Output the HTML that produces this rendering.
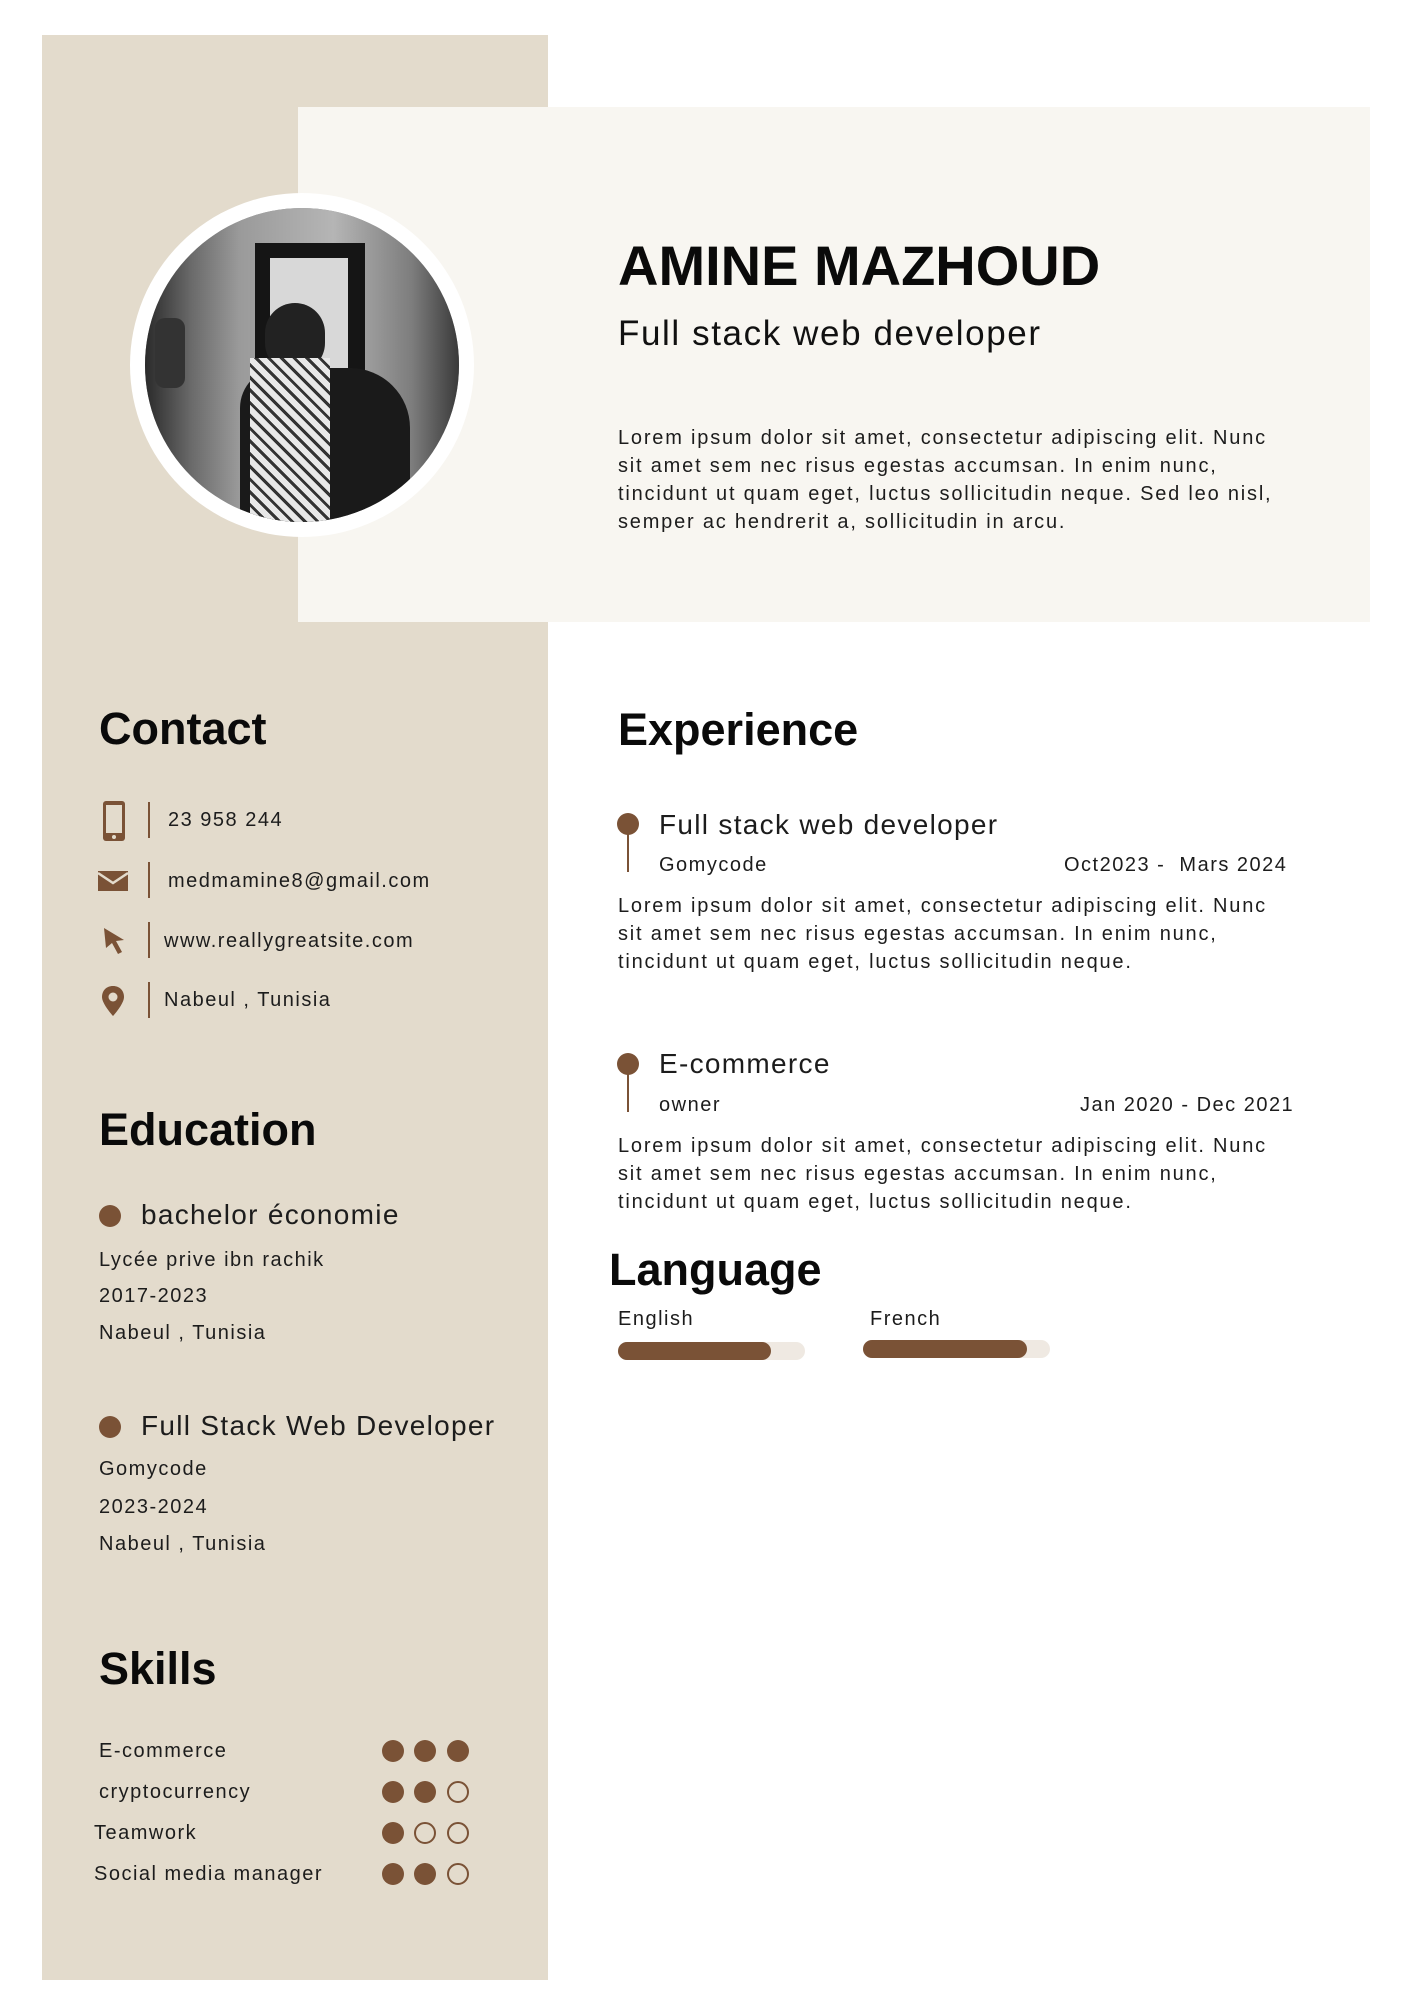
<!DOCTYPE html>
<html><head><meta charset="utf-8"><style>
*{margin:0;padding:0;box-sizing:border-box}
body{width:1414px;height:2000px;background:#fff;position:relative;overflow:hidden;font-family:"Liberation Sans",sans-serif;color:#1c1c1c}
.a{position:absolute;white-space:nowrap}
.h{font-weight:bold;color:#0a0a0a;font-size:45px;line-height:50px}
.t{font-size:20px;line-height:28px;letter-spacing:1.5px}
.b{font-size:20px;line-height:28px;letter-spacing:1.8px}
.s{font-size:28px;line-height:34px;letter-spacing:1.3px}
.dot{position:absolute;width:22px;height:22px;border-radius:50%;background:#7a5236}
.o{background:none;border:2px solid #7a5236}
.sep{position:absolute;width:2px;height:36px;background:#7a5236}
</style></head><body>
<div class="a" style="left:42px;top:35px;width:506px;height:1945px;background:#e3dbcc"></div>
<div class="a" style="left:298px;top:107px;width:1072px;height:515px;background:#f8f6f1"></div>
<div class="a" style="left:130px;top:193px;width:344px;height:344px;border-radius:50%;background:#fff"></div>
<div class="a" style="left:145px;top:208px;width:314px;height:314px;border-radius:50%;overflow:hidden;background:#8a8a8a">
 <div class="a" style="left:0;top:0;width:314px;height:314px;background:linear-gradient(90deg,#2a2a2a 0,#6b6b6b 15%,#9a9a9a 30%,#b5b5b5 60%,#7d7d7d 85%,#3a3a3a 100%)"></div>
 <div class="a" style="left:110px;top:35px;width:110px;height:270px;background:#151515"></div>
 <div class="a" style="left:125px;top:50px;width:78px;height:140px;background:#d8d8d8"></div>
 <div class="a" style="left:120px;top:95px;width:60px;height:70px;border-radius:30px;background:#222"></div>
 <div class="a" style="left:95px;top:160px;width:170px;height:160px;border-radius:40px 60px 0 0;background:#1a1a1a"></div>
 <div class="a" style="left:105px;top:150px;width:80px;height:170px;background:repeating-linear-gradient(45deg,#e8e8e8 0 6px,#333 6px 9px)"></div>
 <div class="a" style="left:10px;top:110px;width:30px;height:70px;border-radius:10px;background:#333"></div>
</div>
<div class="a" style="left:618px;top:233px;font-size:56px;line-height:66px;font-weight:bold;color:#0a0a0a">AMINE MAZHOUD</div>
<div class="a" style="left:618px;top:312px;font-size:35px;line-height:44px;color:#111;letter-spacing:1.6px">Full stack web developer</div>
<div class="a b" style="left:618px;top:424px">Lorem ipsum dolor sit amet, consectetur adipiscing elit. Nunc<br>sit amet sem nec risus egestas accumsan. In enim nunc,<br>tincidunt ut quam eget, luctus sollicitudin neque. Sed leo nisl,<br>semper ac hendrerit a, sollicitudin in arcu.</div>

<div class="a h" style="left:99px;top:704px">Contact</div>
<svg class="a" style="left:102px;top:800px" width="24" height="42" viewBox="0 0 24 42"><rect x="1" y="1" width="22" height="40" rx="3" fill="#7a5236"/><rect x="4" y="5" width="16" height="28" fill="#e3dbcc"/><circle cx="12" cy="37" r="2" fill="#e3dbcc"/></svg>
<div class="sep" style="left:148px;top:802px"></div>
<div class="a t" style="left:168px;top:806px">23 958 244</div>
<svg class="a" style="left:98px;top:871px" width="30" height="20" viewBox="0 0 30 20"><rect width="30" height="20" fill="#7a5236"/><path d="M0 2 L15 12 L30 2" stroke="#e3dbcc" stroke-width="2.5" fill="none"/></svg>
<div class="sep" style="left:148px;top:862px"></div>
<div class="a t" style="left:168px;top:867px">medmamine8@gmail.com</div>
<svg class="a" style="left:102px;top:926px" width="24" height="30" viewBox="0 0 24 30"><path d="M2 2 L22 14 L14 15 L20 26 L16 28 L10 17 L4 22 Z" fill="#7a5236"/></svg>
<div class="sep" style="left:148px;top:922px"></div>
<div class="a t" style="left:164px;top:927px">www.reallygreatsite.com</div>
<svg class="a" style="left:101px;top:985px" width="24" height="32" viewBox="0 0 24 32"><path d="M12 1 C5 1 1 6 1 12 C1 19 12 31 12 31 C12 31 23 19 23 12 C23 6 19 1 12 1 Z" fill="#7a5236"/><circle cx="12" cy="12" r="4.5" fill="#e3dbcc"/></svg>
<div class="sep" style="left:148px;top:982px"></div>
<div class="a t" style="left:164px;top:986px">Nabeul , Tunisia</div>

<div class="a h" style="left:99px;top:1105px">Education</div>
<div class="dot" style="left:99px;top:1205px"></div>
<div class="a s" style="left:141px;top:1198px">bachelor économie</div>
<div class="a t" style="left:99px;top:1246px">Lycée prive ibn rachik</div>
<div class="a t" style="left:99px;top:1282px">2017-2023</div>
<div class="a t" style="left:99px;top:1319px">Nabeul , Tunisia</div>
<div class="dot" style="left:99px;top:1416px"></div>
<div class="a s" style="left:141px;top:1409px">Full Stack Web Developer</div>
<div class="a t" style="left:99px;top:1455px">Gomycode</div>
<div class="a t" style="left:99px;top:1493px">2023-2024</div>
<div class="a t" style="left:99px;top:1530px">Nabeul , Tunisia</div>

<div class="a h" style="left:99px;top:1644px">Skills</div>
<div class="a t" style="left:99px;top:1737px">E-commerce</div>
<div class="a t" style="left:99px;top:1778px">cryptocurrency</div>
<div class="a t" style="left:94px;top:1819px">Teamwork</div>
<div class="a t" style="left:94px;top:1860px">Social media manager</div>
<div class="dot" style="left:382px;top:1740px"></div><div class="dot" style="left:414px;top:1740px"></div><div class="dot" style="left:447px;top:1740px"></div>
<div class="dot" style="left:382px;top:1781px"></div><div class="dot" style="left:414px;top:1781px"></div><div class="dot o" style="left:447px;top:1781px"></div>
<div class="dot" style="left:382px;top:1822px"></div><div class="dot o" style="left:414px;top:1822px"></div><div class="dot o" style="left:447px;top:1822px"></div>
<div class="dot" style="left:382px;top:1863px"></div><div class="dot" style="left:414px;top:1863px"></div><div class="dot o" style="left:447px;top:1863px"></div>

<div class="a h" style="left:618px;top:705px">Experience</div>
<div class="dot" style="left:617px;top:813px"></div>
<div class="a" style="left:627px;top:830px;width:2px;height:42px;background:#7a5236"></div>
<div class="a s" style="left:659px;top:808px">Full stack web developer</div>
<div class="a t" style="left:659px;top:851px">Gomycode</div>
<div class="a t" style="left:1064px;top:851px">Oct2023 -&nbsp; Mars 2024</div>
<div class="a b" style="left:618px;top:892px">Lorem ipsum dolor sit amet, consectetur adipiscing elit. Nunc<br>sit amet sem nec risus egestas accumsan. In enim nunc,<br>tincidunt ut quam eget, luctus sollicitudin neque.</div>
<div class="dot" style="left:617px;top:1053px"></div>
<div class="a" style="left:627px;top:1070px;width:2px;height:42px;background:#7a5236"></div>
<div class="a s" style="left:659px;top:1047px">E-commerce</div>
<div class="a t" style="left:659px;top:1091px">owner</div>
<div class="a t" style="left:1080px;top:1091px">Jan 2020 - Dec 2021</div>
<div class="a b" style="left:618px;top:1132px">Lorem ipsum dolor sit amet, consectetur adipiscing elit. Nunc<br>sit amet sem nec risus egestas accumsan. In enim nunc,<br>tincidunt ut quam eget, luctus sollicitudin neque.</div>

<div class="a h" style="left:609px;top:1245px">Language</div>
<div class="a t" style="left:618px;top:1305px">English</div>
<div class="a t" style="left:870px;top:1305px">French</div>
<div class="a" style="left:618px;top:1342px;width:187px;height:18px;border-radius:9px;background:#efe9e2"></div>
<div class="a" style="left:618px;top:1342px;width:153px;height:18px;border-radius:9px;background:#7a5236"></div>
<div class="a" style="left:863px;top:1340px;width:187px;height:18px;border-radius:9px;background:#efe9e2"></div>
<div class="a" style="left:863px;top:1340px;width:164px;height:18px;border-radius:9px;background:#7a5236"></div>
</body></html>
